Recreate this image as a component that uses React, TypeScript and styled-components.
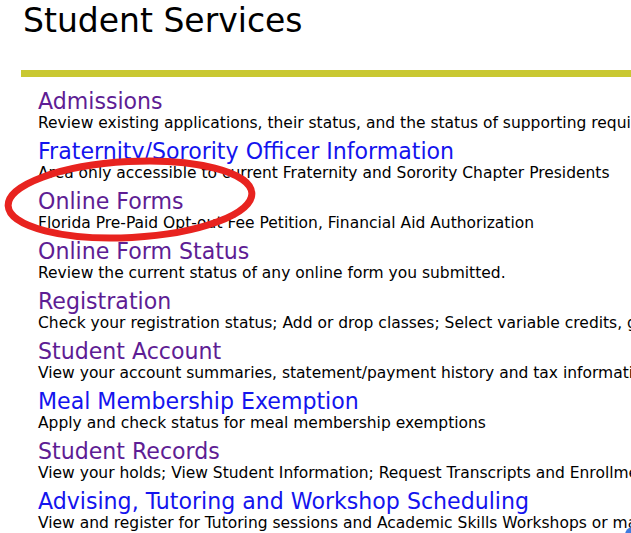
import React from "react";
import styled, { createGlobalStyle } from "styled-components";

const Global = createGlobalStyle`
  html, body { margin: 0; padding: 0; background: #fff; overflow: hidden; }
  body { font-family: "DejaVu Sans", Verdana, sans-serif; }
`;

const Page = styled.div`
  position: relative;
  width: 631px;
  height: 533px;
  overflow: hidden;
`;

const Title = styled.h1`
  margin: 0;
  padding: 1px 0 0 23px;
  font-size: 33px;
  font-weight: normal;
  line-height: 40px;
  color: #000;
  white-space: nowrap;
`;

const Rule = styled.div`
  margin: 29px 0 0 21px;
  height: 7px;
  background: #c9c832;
`;

const List = styled.ul`
  list-style: none;
  margin: 0;
  padding: 9px 0 0 38px;
  width: 1000px;
`;

const Item = styled.li`
  display: flex;
  flex-direction: column;
  padding: 2px 0 4px;
  white-space: nowrap;
`;

const Link = styled.a<{ $visited?: boolean }>`
  font-size: 22.1px;
  line-height: 27px;
  color: ${(p) => (p.$visited ? "#5e1d94" : "#1414ee")};
  text-decoration: none;
`;

const Desc = styled.span`
  font-size: 15.5px;
  line-height: 17px;
  color: #000;
`;

const Ellipse = styled.svg`
  position: absolute;
  left: 0;
  top: 150px;
  pointer-events: none;
`;

const Bubble = styled.div`
  position: absolute;
  right: -10px;
  bottom: -10px;
  width: 16px;
  height: 16px;
  border-radius: 50%;
  background: #3d7be0;
`;

const items = [
  { t: "Admissions", d: "Review existing applications, their status, and the status of supporting requirements", v: true },
  { t: "Fraternity/Sorority Officer Information", d: "Area only accessible to current Fraternity and Sorority Chapter Presidents", v: false },
  { t: "Online Forms", d: "Florida Pre-Paid Opt-out Fee Petition, Financial Aid Authorization", v: true },
  { t: "Online Form Status", d: "Review the current status of any online form you submitted.", v: true },
  { t: "Registration", d: "Check your registration status; Add or drop classes; Select variable credits, grading options", v: true },
  { t: "Student Account", d: "View your account summaries, statement/payment history and tax information", v: true },
  { t: "Meal Membership Exemption", d: "Apply and check status for meal membership exemptions", v: false },
  { t: "Student Records", d: "View your holds; View Student Information; Request Transcripts and Enrollment Verifications", v: true },
  { t: "Advising, Tutoring and Workshop Scheduling", d: "View and register for Tutoring sessions and Academic Skills Workshops or make advising appointments", v: false },
];

export default function App() {
  return (
    <Page>
      <Global />
      <Title>Student Services</Title>
      <Rule />
      <List>
        {items.map((it) => (
          <Item key={it.t}>
            <Link href="#" $visited={it.v}>{it.t}</Link>
            <Desc>{it.d}</Desc>
          </Item>
        ))}
      </List>
      <Ellipse width="280" height="100" viewBox="0 150 280 100">
        <ellipse cx="130" cy="199.5" rx="122" ry="38" fill="none" stroke="#e8231f" strokeWidth="7" transform="rotate(-3 130 199.5)" />
      </Ellipse>
      <Bubble />
    </Page>
  );
}
